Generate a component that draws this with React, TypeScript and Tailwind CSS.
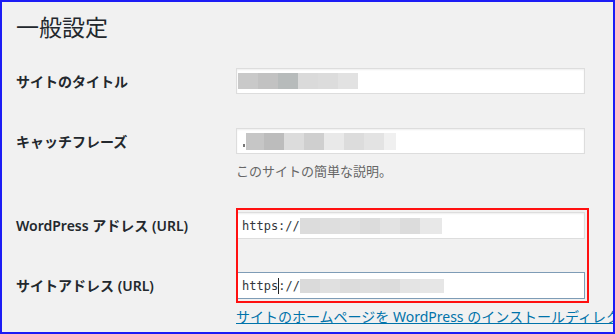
import React from 'react'

type Block = { w: number; c: string }

const titleBlocks: Block[] = [
    { w: 20, c: '#c9c9c9' },
    { w: 20, c: '#c2c2c2' },
    { w: 20, c: '#b7bbbb' },
    { w: 20, c: '#dadada' },
    { w: 20, c: '#dcdcdc' },
    { w: 20, c: '#e2e2e2' },
]

const taglineBlocks: Block[] = [
    { w: 18, c: '#c6c6c6' },
    { w: 20, c: '#bcbcbc' },
    { w: 20, c: '#dcdcdc' },
    { w: 20, c: '#cfcfcf' },
    { w: 20, c: '#e9e9e9' },
    { w: 20, c: '#dcdcdc' },
    { w: 20, c: '#e3e3e3' },
    { w: 12, c: '#f0f0f0' },
]

const wpBlocks: Block[] = [
    { w: 20, c: '#dcdcdc' },
    { w: 20, c: '#dedede' },
    { w: 20, c: '#e0e0e0' },
    { w: 20, c: '#dcdcdc' },
    { w: 20, c: '#e3e3e3' },
    { w: 20, c: '#dcdcdc' },
    { w: 22, c: '#e8e8e8' },
]

const siteBlocks: Block[] = [
    { w: 20, c: '#dadada' },
    { w: 20, c: '#e0e0e0' },
    { w: 20, c: '#dcdcdc' },
    { w: 20, c: '#dedede' },
    { w: 20, c: '#dcdcdc' },
    { w: 20, c: '#e4e4e4' },
    { w: 24, c: '#e6e6e6' },
]

// pixelated (blurred out) text inside the inputs
const Blur = ({ blocks, h }: { blocks: Block[]; h: string }) => (
    <div className={`flex ${h}`}>
        {blocks.map((b, i) => (
            <span key={i} style={{ width: b.w, background: b.c }} />
        ))}
    </div>
)

const Label = ({ children }: { children: React.ReactNode }) => (
    <div className="w-[220px] shrink-0 text-[14px] font-semibold text-[#23282d]">{children}</div>
)

export default function App() {
    return (
        <div className="relative w-[615px] h-[334px] overflow-hidden border-2 border-[#1c1cf5] bg-[#f1f1f1] pl-[14px] pt-[11px] font-['Noto_Sans','Noto_Sans_CJK_JP',sans-serif]">
            <h1 className="h-[29px] text-[23px] leading-[29px] font-normal text-[#23282d]">一般設定</h1>

            {/* サイトのタイトル */}
            <div className="mt-[26px] flex items-center">
                <Label>サイトのタイトル</Label>
                <div className="flex h-[26px] w-[349px] items-center border border-[#dddddd] bg-white pl-[1px] shadow-[inset_0_1px_2px_rgba(0,0,0,0.07)]">
                    <Blur blocks={titleBlocks} h="h-[16px]" />
                </div>
            </div>

            {/* キャッチフレーズ */}
            <div className="mt-[34px] flex items-center">
                <Label>キャッチフレーズ</Label>
                <div className="flex h-[26px] w-[349px] items-center border border-[#dddddd] bg-white pl-[6px] shadow-[inset_0_1px_2px_rgba(0,0,0,0.07)]">
                    <span className="mr-[1px] mt-[8px] h-[3px] w-[2px] bg-[#777]" />
                    <Blur blocks={taglineBlocks} h="h-[17px]" />
                </div>
            </div>
            <p className="ml-[220px] mt-[8px] text-[13px] leading-[18px] text-[#666666]">このサイトの簡単な説明。</p>

            {/* WordPress アドレス */}
            <div className="mt-[32px] flex items-center">
                <Label>WordPress アドレス (URL)</Label>
                <div className="flex h-[27px] w-[349px] items-center border border-[#dddddd] bg-white pl-[5px] font-['DejaVu_Sans_Mono',monospace] text-[12px] text-[#32373c] shadow-[inset_0_1px_2px_rgba(0,0,0,0.07)]">
                    <span className="w-[58px]">https://</span>
                    <Blur blocks={wpBlocks} h="h-[16px]" />
                </div>
            </div>

            {/* サイトアドレス */}
            <div className="mt-[33px] flex items-center">
                <Label>サイトアドレス (URL)</Label>
                <div className="flex h-[27px] w-[349px] items-center border border-[#7e9cb6] bg-white pl-[5px] font-['DejaVu_Sans_Mono',monospace] text-[12px] text-[#32373c]">
                    <span className="flex w-[58px] items-center">
                        https
                        <span className="h-[16px] w-[1px] bg-[#222]" />
                        ://
                    </span>
                    <Blur blocks={siteBlocks} h="h-[14px]" />
                </div>
            </div>

            <a className="ml-[220px] mt-[8px] block whitespace-nowrap text-[14px] leading-[20px] text-[#0073aa] underline" href="#">
                サイトのホームページを WordPress のインストールディレクトリと異なる場所にする場合は、ここに入力してください。
            </a>

            {/* red annotation box */}
            <div className="pointer-events-none absolute left-[234px] top-[206px] h-[95px] w-[353px] border-2 border-[#ff1010]" />
        </div>
    )
}
